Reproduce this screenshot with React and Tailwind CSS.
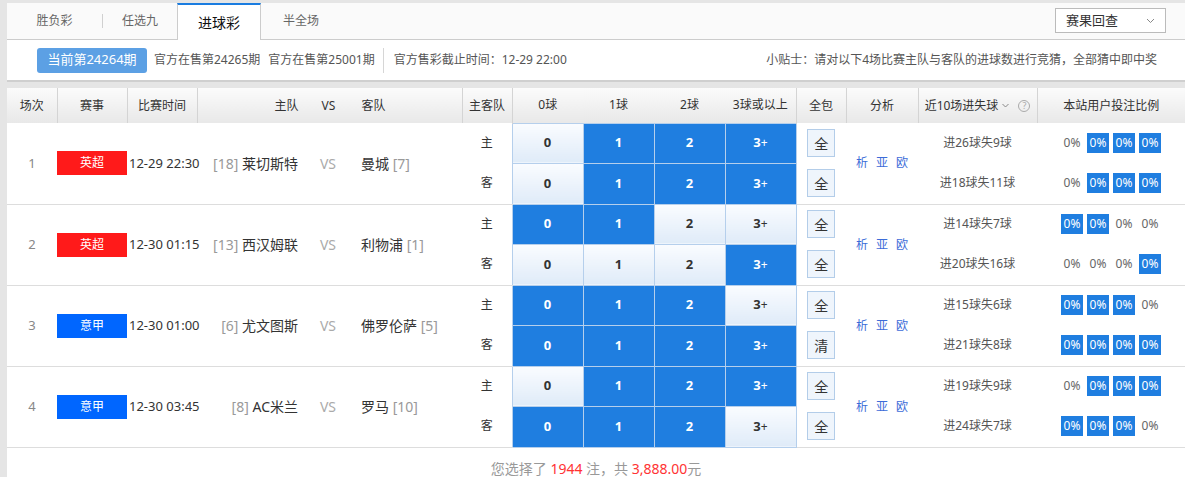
import React from "react";

const matches = [
  {
    no: 1, league: "英超", badge: "bg-[#ff1a1a]", time: "12-29 22:30",
    homeRank: 18, home: "莱切斯特", away: "曼城", awayRank: 7,
    rows: [
      { side: "主", sel: [0, 1, 1, 1], btn: "全", rec: "进26球失9球" },
      { side: "客", sel: [0, 1, 1, 1], btn: "全", rec: "进18球失11球" },
    ],
  },
  {
    no: 2, league: "英超", badge: "bg-[#ff1a1a]", time: "12-30 01:15",
    homeRank: 13, home: "西汉姆联", away: "利物浦", awayRank: 1,
    rows: [
      { side: "主", sel: [1, 1, 0, 0], btn: "全", rec: "进14球失7球" },
      { side: "客", sel: [0, 0, 0, 1], btn: "全", rec: "进20球失16球" },
    ],
  },
  {
    no: 3, league: "意甲", badge: "bg-[#0066ff]", time: "12-30 01:00",
    homeRank: 6, home: "尤文图斯", away: "佛罗伦萨", awayRank: 5,
    rows: [
      { side: "主", sel: [1, 1, 1, 0], btn: "全", rec: "进15球失6球" },
      { side: "客", sel: [1, 1, 1, 1], btn: "清", rec: "进21球失8球" },
    ],
  },
  {
    no: 4, league: "意甲", badge: "bg-[#0066ff]", time: "12-30 03:45",
    homeRank: 8, home: "AC米兰", away: "罗马", awayRank: 10,
    rows: [
      { side: "主", sel: [0, 1, 1, 1], btn: "全", rec: "进19球失9球" },
      { side: "客", sel: [1, 1, 1, 0], btn: "全", rec: "进24球失7球" },
    ],
  },
];

const widths = ["w-[50px]", "w-[70px]", "w-[70px]", "w-[265px]", "w-[50px]", "w-[71px]", "w-[71px]", "w-[71px]", "w-[71px]", "w-[50px]", "w-[72px]", "w-[119px]", "w-[148px]"];

const thBase = "h-[35px] p-0 text-[12px] font-normal text-[#333] bg-gradient-to-b from-[#fbfbfb] to-[#e8e8e8]";
const thLine = `${thBase} border-r border-[#d4d4d4]`;

function BallCell({ label, on, first }) {
  const plus = label === "3";
  return (
    <td
      className={`${first ? "h-[40px]" : "h-[41px]"} p-0 border border-[#b5cfec] text-center text-[13px] font-bold ${
        on ? "bg-[#1f7ee0] text-white" : "bg-gradient-to-b from-[#fafcff] to-[#dfebf8] text-[#333]"
      }`}
    >
      {label}
      {plus && <span className="text-[12px] font-normal">+</span>}
    </td>
  );
}

function Percents({ sel }) {
  return (
    <div className="flex items-center justify-center gap-[4px]">
      {sel.map((on, i) => (
        <span
          key={i}
          className={`flex h-[20px] w-[22px] items-center justify-center text-[12px] ${
            on ? "bg-[#1f7ee0] text-white" : "text-[#666]"
          }`}
        >
          0%
        </span>
      ))}
    </div>
  );
}

function SubRow({ row, first, match }) {
  const last = !first ? "border-b border-[#dddddd]" : "";
  return (
    <tr>
      {first && (
        <>
          <td rowSpan={2} className="border-b border-[#dddddd] p-0 text-center text-[13px] text-[#888]">
            {match.no}
          </td>
          <td rowSpan={2} className="border-b border-[#dddddd] p-0">
            <div className={`flex h-[24px] items-center justify-center text-[12px] text-white ${match.badge}`}>
              {match.league}
            </div>
          </td>
          <td rowSpan={2} className="border-b border-[#dddddd] p-0 pl-[2px] text-left text-[13px] text-[#333] whitespace-nowrap">
            {match.time}
          </td>
          <td rowSpan={2} className="border-b border-[#dddddd] p-0">
            <div className="flex items-center text-[14px]">
              <div className="w-[101px] text-right whitespace-nowrap text-[#333]">
                <span className="text-[#999]">[{match.homeRank}]</span> {match.home}
              </div>
              <div className="w-[60px] text-center text-[#aaa]">VS</div>
              <div className="pl-[3px] whitespace-nowrap text-[#333]">
                {match.away} <span className="text-[#999]">[{match.awayRank}]</span>
              </div>
            </div>
          </td>
        </>
      )}
      <td className={`p-0 text-center text-[12px] text-[#333] ${last}`}>{row.side}</td>
      {["0", "1", "2", "3"].map((l, i) => (
        <BallCell key={l} label={l} on={row.sel[i]} first={first} />
      ))}
      <td className={`p-0 ${last}`}>
        <div className="flex justify-center">
          <button className="flex h-[28px] w-[28px] items-center justify-center border border-[#b3cde9] bg-[#eff5fc] text-[14px] text-[#333]">
            {row.btn}
          </button>
        </div>
      </td>
      {first && (
        <td rowSpan={2} className="border-b border-[#dddddd] p-0">
          <div className="flex justify-center gap-[8px] text-[12px] text-[#3c6cd8]">
            <span>析</span>
            <span>亚</span>
            <span>欧</span>
          </div>
        </td>
      )}
      <td className={`p-0 text-center text-[12px] text-[#555] ${last}`}>{row.rec}</td>
      <td className={`p-0 ${last}`}>
        <Percents sel={row.sel} />
      </td>
    </tr>
  );
}

export default function App() {
  return (
    <div className="min-h-screen bg-[#e5e5e5] pl-[7px] pt-[3px] font-['Noto_Sans','Noto_Sans_CJK_SC',sans-serif]">
      {/* tabs */}
      <div className="flex h-[37px] items-stretch border-b border-[#cccccc] bg-[#fafafa]">
        <div className="flex w-[95px] items-center justify-center text-[12px] text-[#666]">胜负彩</div>
        <div className="my-[11px] w-px bg-[#d0d0d0]" />
        <div className="flex w-[74px] items-center justify-center text-[12px] text-[#666]">任选九</div>
        <div className="-mb-px flex w-[84px] items-center justify-center border-x border-t-2 border-x-[#cccccc] border-t-[#1a7ce0] bg-white text-[14px] text-[#111]">
          进球彩
        </div>
        <div className="flex w-[80px] items-center justify-center text-[12px] text-[#666]">半全场</div>
        <div className="ml-auto mr-[19px] flex items-start pt-[5px]">
          <div className="flex h-[25px] w-[111px] items-center justify-between border border-[#bbbbbb] bg-white pl-[10px] pr-[10px] text-[13px] text-[#333]">
            <span>赛果回查</span>
            <svg width="9" height="6" viewBox="0 0 9 6" fill="none" stroke="#888" strokeWidth="1">
              <path d="M1 1l3.5 3.5L8 1" />
            </svg>
          </div>
        </div>
      </div>

      {/* info bar */}
      <div className="flex h-[42px] items-center border-b-2 border-[#cfcfcf] bg-white pl-[30px] pr-[28px] text-[12px] text-[#555]">
        <button className="h-[25px] w-[110px] rounded-[3px] bg-[#5ca0e4] text-[13px] text-white">当前第24264期</button>
        <span className="ml-[7px]">官方在售第24265期</span>
        <span className="ml-[8px]">官方在售第25001期</span>
        <div className="ml-[8px] h-[25px] w-px bg-[#d6d6d6]" />
        <span className="ml-[10px]">官方售彩截止时间：12-29 22:00</span>
        <span className="ml-auto">小贴士：请对以下4场比赛主队与客队的进球数进行竞猜，全部猜中即中奖</span>
      </div>

      <div className="h-[6px]" />

      {/* table */}
      <table className="w-full table-fixed border-collapse bg-white">
        <colgroup>
          {widths.map((w, i) => (
            <col key={i} className={w} />
          ))}
        </colgroup>
        <thead>
          <tr>
            <th className={thLine}>场次</th>
            <th className={thLine}>赛事</th>
            <th className={thLine}>比赛时间</th>
            <th className={thLine}>
              <div className="flex items-center">
                <div className="w-[101px] text-right">主队</div>
                <div className="w-[60px] text-center">VS</div>
                <div className="pl-[3px] text-left">客队</div>
              </div>
            </th>
            <th className={thLine}>主客队</th>
            <th className={thBase}>0球</th>
            <th className={thBase}>1球</th>
            <th className={thBase}>2球</th>
            <th className={thLine}>3球或以上</th>
            <th className={thLine}>全包</th>
            <th className={thLine}>分析</th>
            <th className={thLine}>
              <div className="flex items-center justify-center">
                <span>近10场进失球</span>
                <svg className="ml-[4px]" width="7" height="5" viewBox="0 0 7 5" fill="none" stroke="#888" strokeWidth="1">
                  <path d="M0.5 1l3 3 3-3" />
                </svg>
                <span className="ml-[9px] flex h-[12px] w-[12px] items-center justify-center rounded-full border border-[#aaa] text-[9px] leading-none text-[#aaa]">
                  ?
                </span>
              </div>
            </th>
            <th className={thBase}>本站用户投注比例</th>
          </tr>
        </thead>
        <tbody>
          {matches.map((m) => (
            <React.Fragment key={m.no}>
              <SubRow row={m.rows[0]} first match={m} />
              <SubRow row={m.rows[1]} first={false} match={m} />
            </React.Fragment>
          ))}
        </tbody>
      </table>

      {/* footer */}
      <div className="h-[40px] bg-white pt-[10px] text-center text-[14px] text-[#999]">
        您选择了 <span className="text-[#f33]">1944</span> 注，共 <span className="text-[#f33]">3,888.00</span>元
      </div>
    </div>
  );
}
